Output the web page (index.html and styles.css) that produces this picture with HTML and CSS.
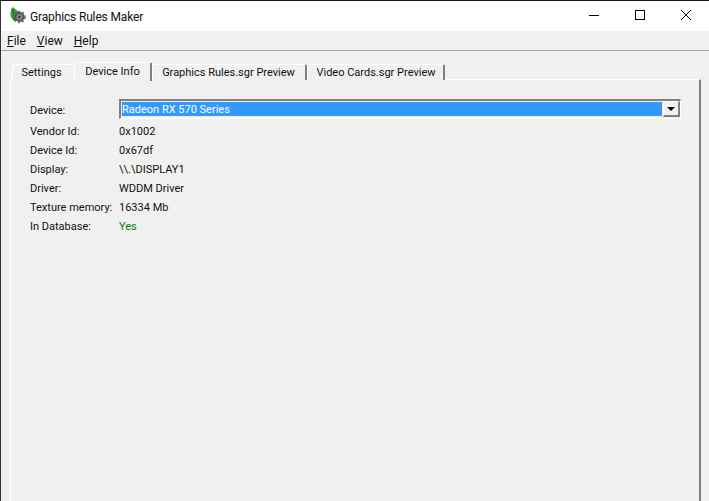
FILE: index.html
```html
<!DOCTYPE html>
<html lang="en">
<head>
<meta charset="utf-8">
<title>Graphics Rules Maker</title>
<link rel="stylesheet" href="styles.css">
</head>
<body>
<div class="window">
  <header class="titlebar">
    <svg class="app-icon" width="16" height="18" viewBox="0 0 16 18">
      <path d="M2.5 0 C0 4 0 8 1.500 11 L5 15 L9 5 C7 3 5 2 2.500 0 Z" fill="#3f9a3a"/>
      <path d="M3 2 L4 13" stroke="#1c6b22" stroke-width="1" fill="none"/>
      <circle cx="9.500" cy="10" r="5" fill="#555"/>
      <circle cx="9.500" cy="10" r="5.500" fill="none" stroke="#666" stroke-width="1.500" stroke-dasharray="2 2"/>
      <circle cx="9.500" cy="10" r="3" fill="#8f8f8f"/>
      <circle cx="9.500" cy="10" r="1.400" fill="#3c3c3c"/>
    </svg>
    <span class="title">Graphics Rules Maker</span>
    <div class="controls">
      <svg class="ctl" width="46" height="30" viewBox="0 0 46 30"><path d="M18 14.500H28" stroke="#000" fill="none"/></svg>
      <svg class="ctl" width="46" height="30" viewBox="0 0 46 30"><rect x="18.500" y="9.500" width="9" height="9" stroke="#000" fill="none"/></svg>
      <svg class="ctl" width="46" height="30" viewBox="0 0 46 30"><path d="M18 9L28 19M28 9L18 19" stroke="#000" fill="none"/></svg>
    </div>
  </header>
  <nav class="menubar">
    <span class="menu"><u>F</u>ile</span>
    <span class="menu"><u>V</u>iew</span>
    <span class="menu"><u>H</u>elp</span>
  </nav>
  <div class="tabs">
    <div class="tabstrip">
      <div class="tab tab-first">Settings</div>
      <div class="tab tab-active">Device Info</div>
      <div class="tab tab-rules">Graphics Rules.sgr Preview</div>
      <div class="tab tab-cards">Video Cards.sgr Preview</div>
    </div>
    <main class="pane">
      <div class="row device-row">
        <span class="label">Device:</span>
        <div class="combo">
          <div class="combo-value">Radeon RX 570 Series</div>
          <div class="combo-btn"><span class="arrow"></span></div>
        </div>
      </div>
      <div class="row"><span class="label">Vendor Id:</span><span>0x1002</span></div>
      <div class="row"><span class="label">Device Id:</span><span>0x67df</span></div>
      <div class="row"><span class="label">Display:</span><span>\\.\DISPLAY1</span></div>
      <div class="row"><span class="label">Driver:</span><span>WDDM Driver</span></div>
      <div class="row"><span class="label">Texture memory:</span><span>16334 Mb</span></div>
      <div class="row"><span class="label">In Database:</span><span class="yes">Yes</span></div>
    </main>
  </div>
</div>
</body>
</html>
```
FILE: styles.css
```css
* { box-sizing: border-box; }
html, body { margin: 0; height: 100%; overflow: hidden; }
body { background: #f0f0f0; font: 11px Roboto, sans-serif; color: #111; }
.window { height: 501px; display: flex; flex-direction: column; border-top: 1px solid #1c1c1c; border-left: 1px solid #333; }
.titlebar { height: 30px; background: #fff; display: flex; align-items: center; padding-left: 9px; flex: none; }
.app-icon { margin-right: 4px; }
.title { font-size: 12px; letter-spacing: -0.15px; color: #111; padding-top: 1px; }
.controls { margin-left: auto; display: flex; }
.ctl { display: block; }
.menubar { height: 20px; background: #f0f0f0; border-bottom: 1px solid #a0a0a0; display: flex; gap: 11px; padding-left: 6px; align-items: center; flex: none; font-size: 12px; }
.tabs { flex: 1; display: flex; flex-direction: column; padding: 9px 8px 0 9px; min-height: 0; }
.tabstrip { display: flex; height: 20px; flex: none; align-items: flex-end; margin-bottom: -1px; position: relative; padding-left: 2px; }
.tab { height: 16px; background: #f0f0f0; border-top: 1px solid #fff; border-left: 1px solid #fff; border-right: 2px solid #808080; display: flex; align-items: center; justify-content: center; border-radius: 2px 2px 0 0; padding-bottom: 1px; }
.tab-first { width: 62px; border-right: 0; padding-right: 4px; }
.tab-active { width: 78px; height: 19px; position: relative; z-index: 1; padding-bottom: 2px; margin-bottom: -1px; }
.tab-rules { width: 155px; padding-right: 1px; }
.tab-cards { width: 138px; padding-left: 1px; }
.pane { flex: 1; background: #f0f0f0; border-top: 1px solid #fff; border-left: 1px solid #fff; border-right: 2px solid #808080; padding: 20px 18px 0 19px; min-height: 0; }
.row { display: flex; height: 19px; align-items: center; }
.label { width: 89px; flex: none; }
.device-row { height: 20px; margin-bottom: 3px; margin-top: -1px; }
.device-row .label { padding-top: 2px; }
.combo { flex: 1; height: 20px; display: flex; border: 2px solid #808080; border-right: 1px solid #fff; border-bottom: 1px solid #fff; padding-top: 1px; background: #f0f0f0; }
.combo-value { flex: 1; height: 14px; color: #fff; margin-right: 1px; line-height: 15px; background: #3399ff; border-left: 1px solid #cfe6ff; }
.combo-btn { width: 17px; height: 16px; margin-top: -1px; background: #f0f0f0; border: 1px solid #fff; border-right: 2px solid #808080; border-bottom: 2px solid #808080; display: flex; align-items: center; justify-content: center; }
.arrow { width: 0; height: 0; border: 4px solid transparent; border-top: 4px solid #000; border-bottom: 0; }
.yes { color: #008000; }
```
